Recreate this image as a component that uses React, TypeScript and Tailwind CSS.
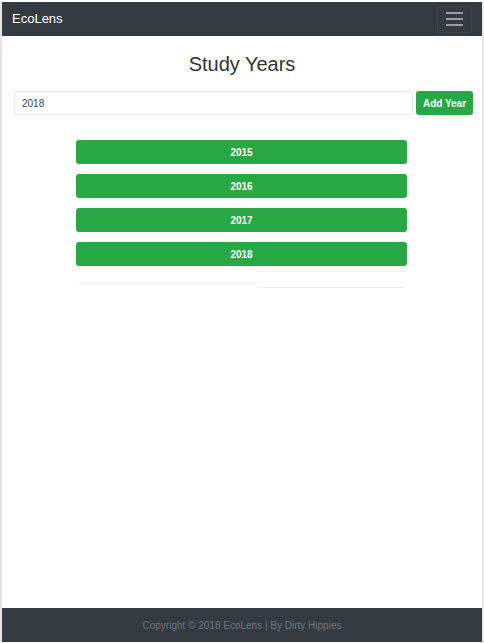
const years = ['2015', '2016', '2017', '2018'];

export default function App() {
  return (
    <div
      className="flex h-[643px] w-[484px] flex-col border-l-2 border-r-2 border-t-2 border-b border-l-[#e4e4e4] border-r-[#e9e9e9] border-t-white border-b-white bg-white"
      style={{ fontFamily: '"Liberation Sans", Arial, sans-serif' }}
    >
      <nav className="flex h-[34px] items-center justify-between bg-[#343a40] pl-[10px] pr-[10px]">
        <span className="text-[13px] text-white">EcoLens</span>
        <button className="flex h-[27px] w-[35px] flex-col items-center justify-center gap-[4.5px] rounded-[3px] border border-white/[0.06]">
          <span className="h-[1.5px] w-[17px] bg-[#9a9da0]" />
          <span className="h-[1.5px] w-[17px] bg-[#9a9da0]" />
          <span className="h-[1.5px] w-[17px] bg-[#9a9da0]" />
        </button>
      </nav>

      <main className="flex flex-1 flex-col">
        <h1 className="mt-[15px] text-center text-[20px] leading-[26px] text-[#333]">Study Years</h1>

        <div className="mt-[14px] flex gap-[3px] pl-[12px] pr-[9px]">
          <input
            readOnly
            value="2018"
            className="h-[24px] flex-1 rounded-[3px] border border-[#e5e5e5] px-[7px] text-[10px] text-[#444] outline-none"
          />
          <button className="h-[24px] w-[57px] rounded-[3px] bg-[#28a745] text-[10px] font-bold text-white">
            Add Year
          </button>
        </div>

        <div className="mt-[25px] flex flex-col gap-[10px] pl-[74px] pr-[75px]">
          {years.map((y) => (
            <button
              key={y}
              className="h-[24px] w-full rounded-[3px] bg-[#28a745] text-[10px] font-bold text-white"
            >
              {y}
            </button>
          ))}
        </div>

        <div className="flex pl-[77px] pr-[77px]">
          <div className="mt-[17px] h-px w-[178px] bg-[#eaeeee]" />
          <div className="flex w-[148px] flex-col">
            <div className="mt-[5px] h-px bg-[#eaeeee]" />
            <div className="mt-[15px] h-px bg-[#eaeeee]" />
          </div>
        </div>
      </main>

      <footer className="flex h-[34px] items-center justify-center bg-[#343a40]">
        <span className="text-[10px] text-[#6c757d]">Copyright © 2018 EcoLens | By Dirty Hippies</span>
      </footer>
    </div>
  );
}
